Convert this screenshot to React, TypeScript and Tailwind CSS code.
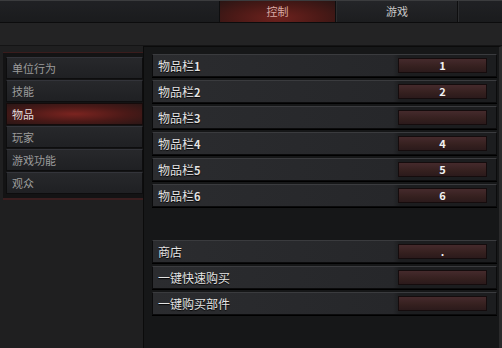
import React from "react";

const slots = [
    { label: "物品栏", num: "1", key: "1" },
    { label: "物品栏", num: "2", key: "2" },
    { label: "物品栏", num: "3", key: "" },
    { label: "物品栏", num: "4", key: "4" },
    { label: "物品栏", num: "5", key: "5" },
    { label: "物品栏", num: "6", key: "6" },
];

const shop = [
    { label: "商店", key: "." },
    { label: "一键快速购买", key: "" },
    { label: "一键购买部件", key: "" },
];

const menu = ["单位行为", "技能", "物品", "玩家", "游戏功能", "观众"];

const BindRow = ({ label, num, bindKey }: { label: string; num?: string; bindKey: string }) => {
    return (
        <div className="h-[23px] flex items-center justify-between border border-[#0b0b0c] border-t-[#3a3b3e] bg-[linear-gradient(to_right,#2b2c2f,#26272a_70%,#1c1d1f_72%,#1c1d1f)] shadow-[0_1px_0_#000]">
            <span className="pl-[5px] text-[12px] text-[#e4e4e4] [text-shadow:0_1px_1px_#000] leading-none">
                {label}
                {num && <span className="font-bold text-[11px]">{num}</span>}
            </span>
            <div className="w-[89px] h-[15px] mr-[9px] flex items-center justify-center border border-[#150c0d] bg-[linear-gradient(to_bottom,#452a2c,#35201f_60%,#2b1a1b)] text-[11px] font-bold text-[#f2f2f2] leading-none">
                {bindKey}
            </div>
        </div>
    );
};

export default function App() {
    return (
        <div className="w-[502px] h-[348px] overflow-hidden bg-[#1f1f20] flex flex-col [font-family:'Noto_Sans_CJK_SC','Noto_Sans',sans-serif]">
            {/* top tab bar */}
            <div className="h-[23px] flex border-t border-[#3b3c3e] border-b border-b-[#0c0c0d] bg-[linear-gradient(to_bottom,#202124,#1a1b1d)]">
                <div className="w-[220px] border-r border-[#0e0e0f]" />
                <div className="w-[116px] flex items-center justify-center text-[11px] text-[#d9aaa5] border-r border-[#0e0e0f] bg-[radial-gradient(ellipse_at_50%_80%,#6e221e,#4a1916_55%,#2a1514)]">
                    控制
                </div>
                <div className="w-[122px] flex items-center justify-center text-[11px] text-[#c9c9c9] border-l border-[#2c2d2f] border-r border-r-[#0e0e0f] bg-[linear-gradient(to_bottom,#242528,#1c1d1f)]">
                    游戏
                </div>
                <div className="flex-1 border-l border-[#2c2d2f]" />
            </div>
            {/* band */}
            <div className="h-[23px] bg-[#232324] border-b border-[#141415]" />
            <div className="flex-1 flex">
                {/* left menu */}
                <div className="w-[143px] pl-[3px] pt-[6px]">
                    <div className="w-[142px] border-t border-[#3a1c1c] border-b-2 border-b-[#3a1e1f] bg-[#131314] pl-[3px] pr-[2px] pt-[4px] pb-[4px] flex flex-col gap-[1px]">
                        {menu.map((m) => (
                            <div
                                key={m}
                                className={
                                    m === "物品"
                                        ? "h-[22px] flex items-center pl-[5px] text-[11px] text-[#e2dcdc] border border-[#150b0b] bg-[radial-gradient(ellipse_at_center,#7b2420,#4a1917_55%,#2b1716)]"
                                        : "h-[22px] flex items-center pl-[5px] text-[11px] text-[#9c9c9c] border border-[#0d0d0e] border-t-[#33343a] bg-[linear-gradient(to_bottom,#27282b,#1f2023)]"
                                }
                            >
                                {m}
                            </div>
                        ))}
                    </div>
                </div>
                {/* right panel */}
                <div className="flex-1 bg-[#161718] border-l border-t border-[#0b0b0b] border-r-[3px] border-r-[#2a2a2b] pl-[8px] pr-[2px] pt-[7px]">
                    <div className="flex flex-col gap-[3px]">
                        {slots.map((s) => (
                            <BindRow key={s.num} label={s.label} num={s.num} bindKey={s.key} />
                        ))}
                    </div>
                    <div className="flex flex-col gap-[3px] mt-[33px]">
                        {shop.map((s) => (
                            <BindRow key={s.label} label={s.label} bindKey={s.key} />
                        ))}
                    </div>
                </div>
            </div>
        </div>
    );
}
